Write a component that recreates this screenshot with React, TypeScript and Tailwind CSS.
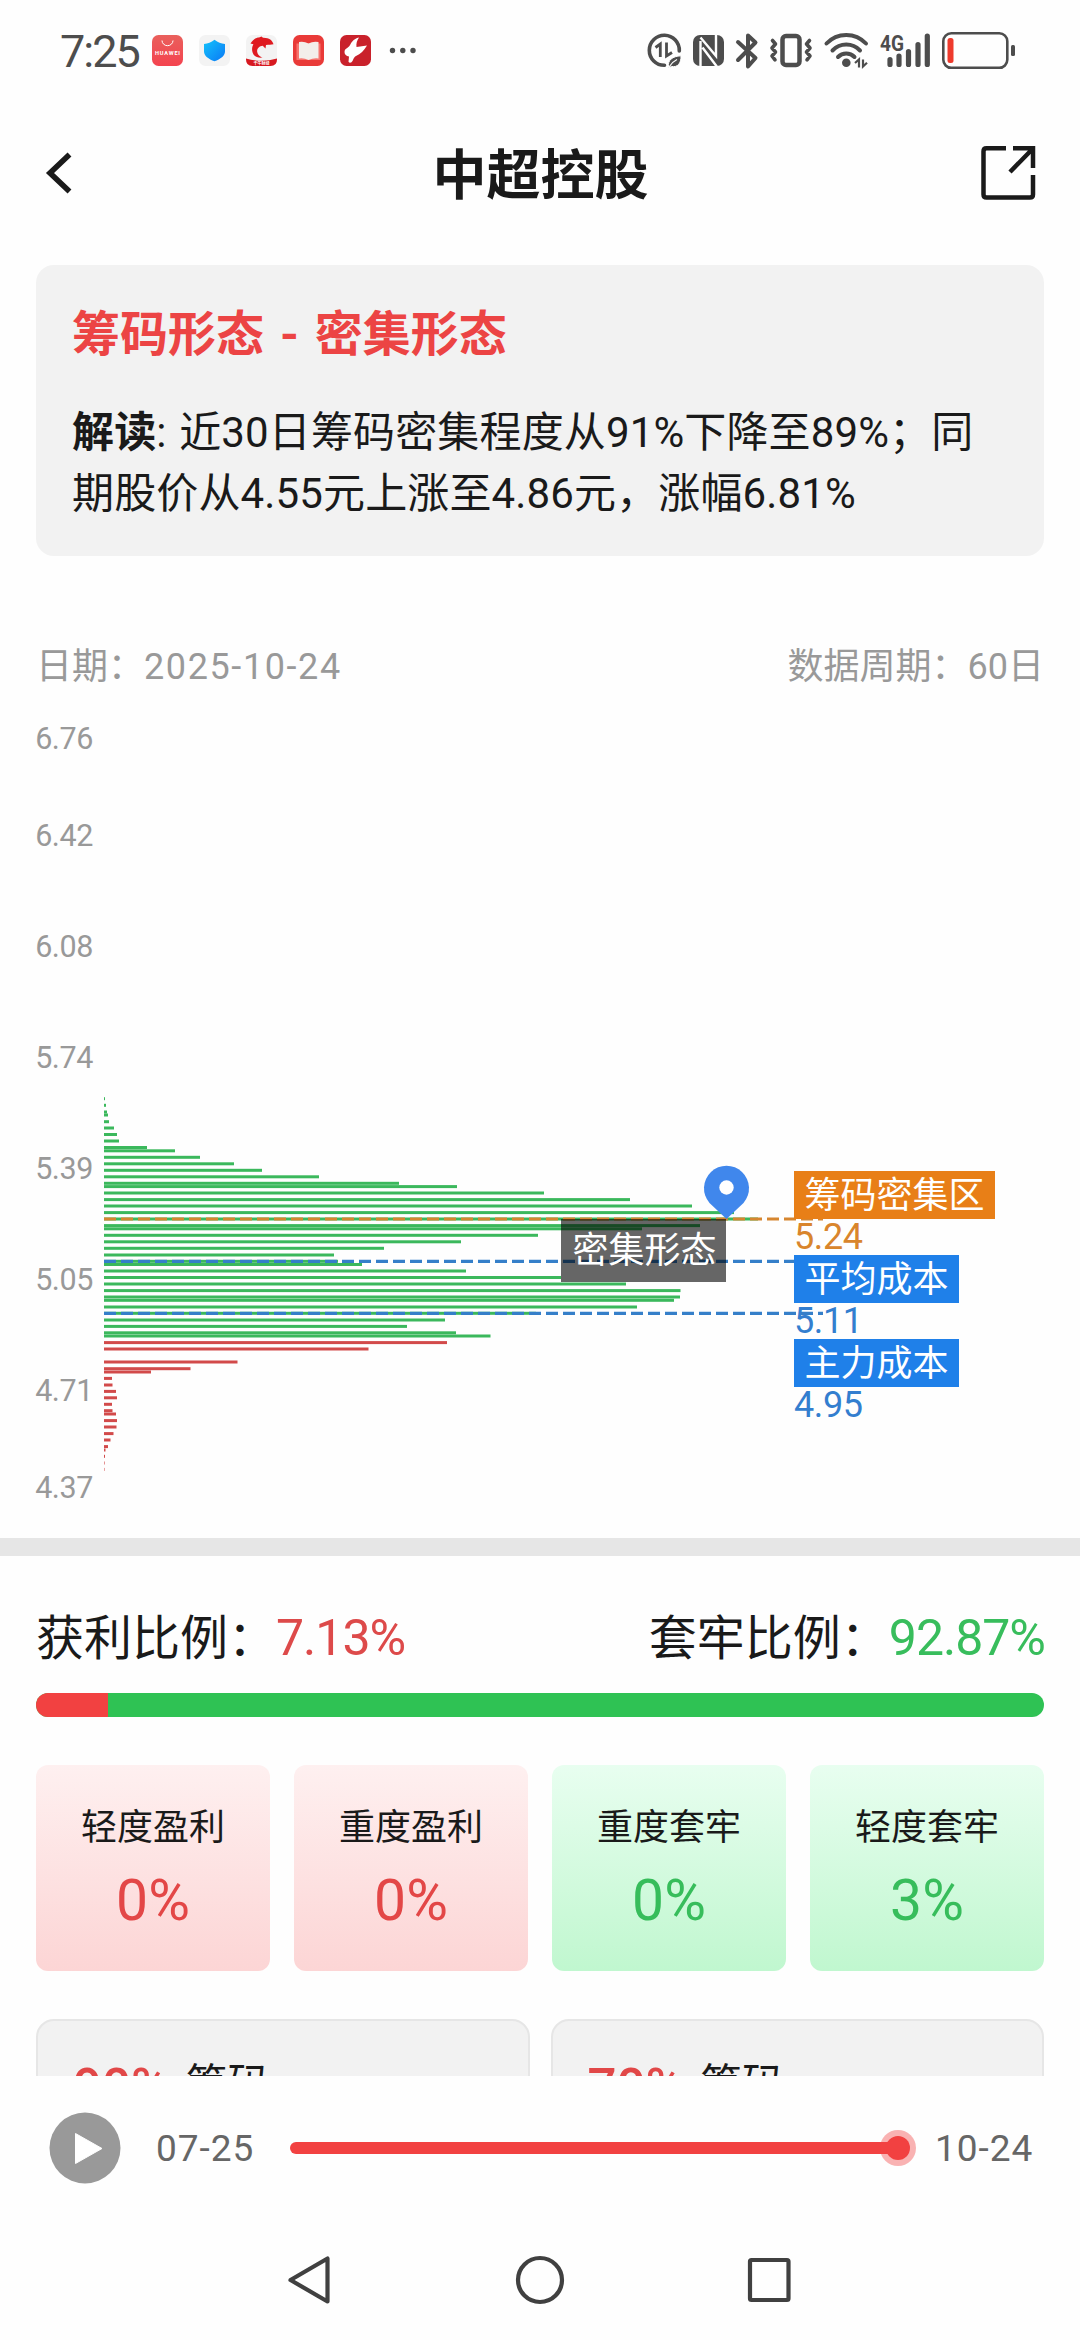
import React from "react";

type Bar = [y: number, width: number];

const GREEN_BARS: Bar[] = [
  [1098.7, 1], [1105.3, 2], [1112, 3], [1115, 4], [1121.7, 5], [1128, 10], [1134.5, 13], [1141, 15],
  [1147.5, 43], [1150.8, 71], [1157.3, 96], [1163.8, 130], [1170.3, 158], [1176.8, 215], [1183.3, 295],
  [1186.6, 353], [1193, 440], [1199.6, 526], [1206, 588], [1212.6, 630], [1219, 654], [1225.6, 596],
  [1228.8, 538], [1235.3, 434], [1241.8, 357], [1248.3, 280], [1255, 230], [1261.3, 234], [1264.5, 258],
  [1271, 362], [1277.5, 457], [1284, 522], [1290.6, 576.5], [1297, 576], [1300.3, 570], [1307, 533],
  [1313.3, 432], [1320, 341], [1326.4, 303], [1332.8, 352], [1336, 386.5],
];

const RED_BARS: Bar[] = [
  [1342.6, 343], [1349, 264.5], [1362, 133.5], [1368.7, 86.5], [1372, 47], [1378.4, 8], [1385, 8.5],
  [1391.4, 12], [1397.8, 13], [1404.3, 8], [1410.7, 8.5], [1414, 12], [1420.6, 13], [1427, 12.5],
  [1433.6, 9.5], [1440, 6.5], [1446.6, 4], [1450, 1.5], [1456.3, 1], [1463, 0.6], [1469.4, 0.5],
];

const AXIS = ["6.42", "6.08", "5.74", "5.39", "5.05", "4.71"];

const LEVELS = [
  { name: "筹码密集区", value: "5.24", box: "bg-[#e87f17]", text: "text-[#d9852c]" },
  { name: "平均成本", value: "5.11", box: "bg-[#1f80e9]", text: "text-[#337ecf]" },
  { name: "主力成本", value: "4.95", box: "bg-[#1f80e9]", text: "text-[#337ecf]" },
];

const TILES = [
  { name: "轻度盈利", value: "0%", profit: true },
  { name: "重度盈利", value: "0%", profit: true },
  { name: "重度套牢", value: "0%", profit: false },
  { name: "轻度套牢", value: "3%", profit: false },
];

function StatusBar() {
  return (
    <div className="flex h-[100px] shrink-0 items-start text-[#4d4d4d]">
      <span className="ml-[60px] mt-[27px] w-[92px] whitespace-nowrap text-[45px] leading-[50px] tracking-[-2px]">7:25</span>
      <svg className="mt-[30px] h-[42px] w-[270px]" viewBox="152 30 270 42">
        <defs>
          <linearGradient id="shop" x1="0" y1="0" x2="0" y2="1">
            <stop offset="0" stopColor="#e9605c" />
            <stop offset="1" stopColor="#f4434f" />
          </linearGradient>
          <linearGradient id="shield" x1="0" y1="0" x2="1" y2="1">
            <stop offset="0" stopColor="#14c3fb" />
            <stop offset="1" stopColor="#0a78f5" />
          </linearGradient>
        </defs>
        <rect x="152" y="35" width="31" height="31" rx="6.5" fill="url(#shop)" />
        <path d="M162 40.5a5.5 5.2 0 0 0 11 0" fill="none" stroke="#fff" strokeWidth="1" />
        <text x="167.5" y="55" textAnchor="middle" fontSize="5.6" fontWeight="700" textLength="25" fill="#fff">HUAWEI</text>
        <rect x="199" y="35" width="31" height="31" rx="6.5" fill="#f3f3f3" />
        <path d="M214.500 39.800c3.500 2.700 6.500 3.800 10.500 4.200v7.500c0 4.500-4.500 7.500-10.500 9.800c-6-2.300-10.500-5.300-10.500-9.800V44c4-.4 7-1.500 10.500-4.200z" fill="url(#shield)" />
        <rect x="246" y="35" width="31" height="31" rx="6.500" fill="#f3f3f3" />
        <path d="M246 58.500q15.500 4.500 31 0v1q0 6.500-6.500 6.500h-18q-6.500 0-6.500-6.500z" fill="#d71920" />
        <path d="M250.500 43.500c2.500-4.500 6-6 8.500-6l2.500-1 1.500 1.200c6-.2 9.500 2.600 10.500 6.600c-2 .6-5 .3-7.500.6l-.5 3.500-2.800-2.600c-3.500.4-6 2.800-5.500 6.200c.4 3 2.800 4.600 5.300 5.500c-5 .8-9.500-1.400-10.300-6.500c-.3-2.500 0-4.700 1.200-6.700z" fill="#df1a20" />
        <text x="261.500" y="65" textAnchor="middle" fontSize="4" fontWeight="700" fill="#fff">千牛财经</text>
        <rect x="293" y="35" width="31" height="31" rx="6.500" fill="#e93a38" />
        <path d="M296.500 43.500h24v16.500h-24z" fill="#f7746e" />
        <path d="M299 42q5-1 9.500 1.500Q313 41 318.500 42v16.500q-5-.7-10 1.500q-4.500-2.200-9.500-1.500z" fill="#f3eeea" />
        <rect x="340" y="35" width="31" height="31" rx="6.500" fill="#c9212b" />
        <path d="M359 37.500c-2 3-3 6-2.500 9.500l10.500-1.500c-3 5-6.500 8.500-11 10.500c-2.500 1-2.500 4.500-4.500 6.200c-1 .8-2.500.5-3-.4l.5-5.300c-2.700-.2-4.500-2-4.500-4.500c0-2.200 1.400-3.300 3.300-4.500c2.400-1.500 2.500-4 4.500-6c1.800-2 4-3.400 6.700-4z" fill="#fff" />
        <g fill="#4d4d4d">
          <circle cx="392.500" cy="50.500" r="2.700" />
          <circle cx="402.800" cy="50.500" r="2.700" />
          <circle cx="413" cy="50.500" r="2.700" />
        </g>
      </svg>
      <svg className="ml-[222px] mt-[28px] h-[46px] w-[376px]" viewBox="644 28 376 46" fill="none" stroke="#4d4d4d">
        <path d="M664.500 65.300A15 15 0 1 1 679.300 51" strokeWidth="3.600" strokeLinecap="round" />
        <path d="M655.500 47.500l4.800-3.500v13M666.500 42.500v13.500l5.500-3.500" strokeWidth="2.800" />
        <path d="M668.500 67c-1-7 4-10.800 12.500-11.200c.3 7.500-3.500 12-9.500 10.600l-2.500 1.400z" fill="#4d4d4d" stroke="#fefefe" strokeWidth="1" />
        <path d="M669 67q3-5 8-7.500" stroke="#fefefe" strokeWidth="1.200" />
        <rect x="693" y="35" width="31" height="31" rx="7" fill="#4d4d4d" stroke="none" />
        <path d="M700.500 66.500V41M700.500 37.500L716 56V34.500M702.500 47.500L716.800 66.500" stroke="#fefefe" strokeWidth="2.400" />
        <path d="M738 42l17.500 16-7.500 8.500v-31l7.500 7L738 60" strokeWidth="4" strokeLinecap="round" strokeLinejoin="round" />
        <rect x="782.500" y="36" width="17" height="29" rx="3.500" strokeWidth="4.500" />
        <path d="M772.500 40.500l3 3.500-3.500 4 3.500 4-3.500 4 3 3.800M809.500 40.500l-3 3.500 3.500 4-3.500 4 3.500 4-3 3.800" strokeWidth="3.600" strokeLinecap="round" strokeLinejoin="round" />
        <path d="M826.500 43.500a27 27 0 0 1 39.500 0M832.500 50.500a19 19 0 0 1 27.500 0M838 57a11.500 11.500 0 0 1 16.500 0" strokeWidth="4" strokeLinecap="round" />
        <circle cx="846.300" cy="62.800" r="4.300" fill="#4d4d4d" stroke="none" />
        <path d="M855 63l4-3.500v8M863 59.500v7l4-3.800" strokeWidth="2.200" />
        <text x="880" y="50.500" fontSize="22" fontWeight="700" textLength="24" lengthAdjust="spacingAndGlyphs" fill="#4d4d4d" stroke="none">4G</text>
        <path d="M890 59.500v5M899 56v8.500M908.500 51.500v13M918 44.500v20M927.300 36v28.500" strokeWidth="5.200" strokeLinecap="round" />
        <rect x="943.300" y="33.300" width="64" height="34.500" rx="8" strokeWidth="2.600" />
        <rect x="947.500" y="38" width="6" height="25" rx="2.500" fill="#ee3a2c" stroke="none" />
        <rect x="1011" y="45" width="4" height="11" rx="1.500" fill="#4d4d4d" stroke="none" />
      </svg>
    </div>
  );
}

function Header() {
  return (
    <div className="flex h-[146px] shrink-0 items-center justify-between">
      <svg className="ml-[40px] h-[54px] w-[60px]" viewBox="40 146 60 54" fill="none" stroke="#1a1a1a">
        <path d="M69.500 154.500L50 173l19.500 18.500" strokeWidth="5.600" />
      </svg>
      <h1 className="pl-[1px] pt-[7px] text-[54px] font-bold leading-[64px] text-[#1a1a1a]">中超控股</h1>
      <svg className="mr-[40px] h-[60px] w-[60px]" viewBox="980 143 60 60" fill="none" stroke="#1a1a1a" strokeWidth="4.500">
        <path d="M1006 148.300H986.500q-3 0-3 3V194.500q0 3 3 3H1030q3 0 3-3V175M1013 148.300h20V168M1032 149.500L1010 172" />
      </svg>
    </div>
  );
}

function ChipChart() {
  return (
    <div className="relative flex h-[848px] shrink-0">
      <div className="flex w-[93px] flex-col items-end pt-[31px] text-[30.5px] leading-[36px] tracking-[-0.4px] text-[#999999]">
        <span className="h-[59.5px]">6.76</span>
        {AXIS.map((v) => (
          <span key={v} className="flex h-[111px] items-center">{v}</span>
        ))}
        <span className="flex h-[59.5px] items-end">4.37</span>
      </div>
      <svg className="ml-[11px] h-[848px] w-[976px]" viewBox="104 690 976 848" fill="none">
        {GREEN_BARS.map(([y, w]) => (
          <rect key={y} x="104" y={y - 1.5} width={w} height="3" fill="#3bb85c" />
        ))}
        {RED_BARS.map(([y, w]) => (
          <rect key={y} x="104" y={y - 1.5} width={w} height="3" fill="#d24a4a" />
        ))}
        <path d="M104 1219H823" stroke="#d68630" strokeWidth="3.200" strokeDasharray="12 5" />
        <path d="M104 1261.400H823M104 1313.400H823" stroke="#357fc9" strokeWidth="3.200" strokeDasharray="12 5" />
        <path d="M726.500 1219L709.500 1203A22.500 22.500 0 1 1 743.500 1203z" fill="#4087ec" />
        <circle cx="726.500" cy="1187.500" r="7.200" fill="#fff" />
      </svg>
      <div className="absolute left-[561px] top-[529px] flex h-[63px] w-[165px] items-center justify-center bg-black/60 pl-[2px] pt-[1px] text-[36px] leading-none text-white">
        密集形态
      </div>
      <div className="absolute left-[794px] top-[481px] flex flex-col items-start text-[36px]">
        {LEVELS.map((l) => (
          <React.Fragment key={l.name}>
            <span className={"flex h-[48px] items-center px-[10.5px] pt-[3px] leading-[45px] text-white " + l.box}>{l.name}</span>
            <span className={"h-[36px] leading-[36px] tracking-[-0.4px] " + l.text}>{l.value}</span>
          </React.Fragment>
        ))}
      </div>
    </div>
  );
}

function RangeCard({ pct }: { pct: string }) {
  return (
    <div className="h-[200px] flex-1 rounded-[18px] border-2 border-[#e6e6e6] bg-[#f2f2f2] px-[35px] pt-[36px]">
      <p className="flex gap-[17px]">
        <span className="text-[51px] font-medium leading-[62px] text-[#e14848]">{pct}</span>
        <span className="text-[42px] leading-[56px] text-[#1a1a1a]">筹码</span>
      </p>
    </div>
  );
}

export default function App() {
  return (
    <div className="flex h-[2340px] w-[1080px] flex-col overflow-hidden bg-[#fefefe] font-[Roboto,'Noto_Sans_CJK_SC',sans-serif]">
      <StatusBar />
      <Header />
      <div className="flex h-[1830px] shrink-0 flex-col overflow-hidden">
        <section className="mx-9 mt-[19px] h-[291px] shrink-0 rounded-[18px] bg-[#f2f2f2] px-9 pt-[40px]">
          <h2 className="text-[48px] font-bold leading-[60px] text-[#ec4444] [word-spacing:4px]">筹码形态 - 密集形态</h2>
          <p className="mt-[37px] whitespace-nowrap text-[42px] leading-[61px] tracking-[0.14px] text-[#1a1a1a]">
            <b>解读</b><span className="[word-spacing:2px]">: </span>近30日筹码密集程度从91%下降至89%；同
            <br />
            期股价从4.55元上涨至4.86元，涨幅6.81%
          </p>
        </section>
        <div className="mt-[87px] flex h-[47px] shrink-0 items-center justify-between px-9 text-[36px] leading-[48px] text-[#999999]">
          <span>日期：<span className="tracking-[1.6px]">2025-10-24</span></span>
          <span>数据周期：<span className="text-[36px]">60</span>日</span>
        </div>
        <ChipChart />
        <div className="h-[18px] shrink-0 bg-[#e6e6e6]" />
        <section className="px-9 pt-[50px]">
          <div className="flex h-[60px] items-center justify-between pt-[4px] text-[48px] leading-[60px] text-[#1a1a1a]">
            <span>获利比例：<span className="text-[50px] tracking-[-1px] text-[#dd4a4a]">7.13%</span></span>
            <span className="-mr-[1px]">套牢比例：<span className="text-[50px] tracking-[-1px] text-[#38bd5c]">92.87%</span></span>
          </div>
          <div className="mt-[27px] flex h-[24px] overflow-hidden rounded-[12px] bg-[#2fc254]">
            <div className="h-full w-[7.13%] bg-[#f24141]" />
          </div>
          <div className="mt-12 grid grid-cols-4 gap-6">
            {TILES.map((t) => (
              <div
                key={t.name}
                className={
                  "flex h-[206px] flex-col items-center rounded-[12px] bg-linear-to-b pt-[39px] " +
                  (t.profit ? "from-[#fef0f0] to-[#fcd5d5]" : "from-[#e8fef0] to-[#c0f7cf]")
                }
              >
                <span className="text-[36px] leading-[48px] text-[#1a1a1a]">{t.name}</span>
                <span className={"mt-[17px] text-[57px] leading-[64px] " + (t.profit ? "text-[#e34747]" : "text-[#37bd5b]")}>{t.value}</span>
              </div>
            ))}
          </div>
          <div className="mt-12 flex gap-[21px]">
            <RangeCard pct="90%" />
            <RangeCard pct="70%" />
          </div>
        </section>
      </div>
      <div className="flex h-[144px] shrink-0 items-center text-[37px] leading-[48px] text-[#666666]">
        <svg className="ml-[49px] h-[72px] w-[72px]" viewBox="0 0 72 72">
          <circle cx="36" cy="36" r="35.500" fill="#999999" />
          <path d="M26.500 21.500L53 36.500L26.500 51.500z" fill="#fff" stroke="#fff" strokeWidth="1" strokeLinejoin="round" />
        </svg>
        <span className="ml-[35px] w-[100px] whitespace-nowrap pt-[2px] tracking-[1px]">07-25</span>
        <div className="relative ml-[34px] h-[12px] w-[612px] rounded-full bg-[#f24141]">
          <div className="absolute -right-[14px] -top-[12px] flex h-[36px] w-[36px] items-center justify-center rounded-full bg-[#f24141]/40">
            <div className="h-[24px] w-[24px] rounded-full bg-[#f24141]" />
          </div>
        </div>
        <span className="ml-[33px] whitespace-nowrap pt-[2px] tracking-[1px]">10-24</span>
      </div>
      <div className="flex h-[120px] shrink-0 items-center">
        <svg className="ml-[284px] h-[52px] w-[50px]" viewBox="284 2254 50 52" fill="none" stroke="#404040" strokeWidth="4.200" strokeLinejoin="round">
          <path d="M327.500 2258.500V2301.500L290.500 2280z" />
        </svg>
        <svg className="ml-[180px] h-[52px] w-[52px]" viewBox="0 0 52 52" fill="none" stroke="#404040" strokeWidth="4.200">
          <circle cx="26" cy="26" r="22" />
        </svg>
        <svg className="ml-[177px] h-[52px] w-[52px]" viewBox="743 2254 52 52" fill="none" stroke="#404040" strokeWidth="4.200">
          <rect x="750" y="2260" width="38.500" height="40" rx="1.500" />
        </svg>
      </div>
    </div>
  );
}
